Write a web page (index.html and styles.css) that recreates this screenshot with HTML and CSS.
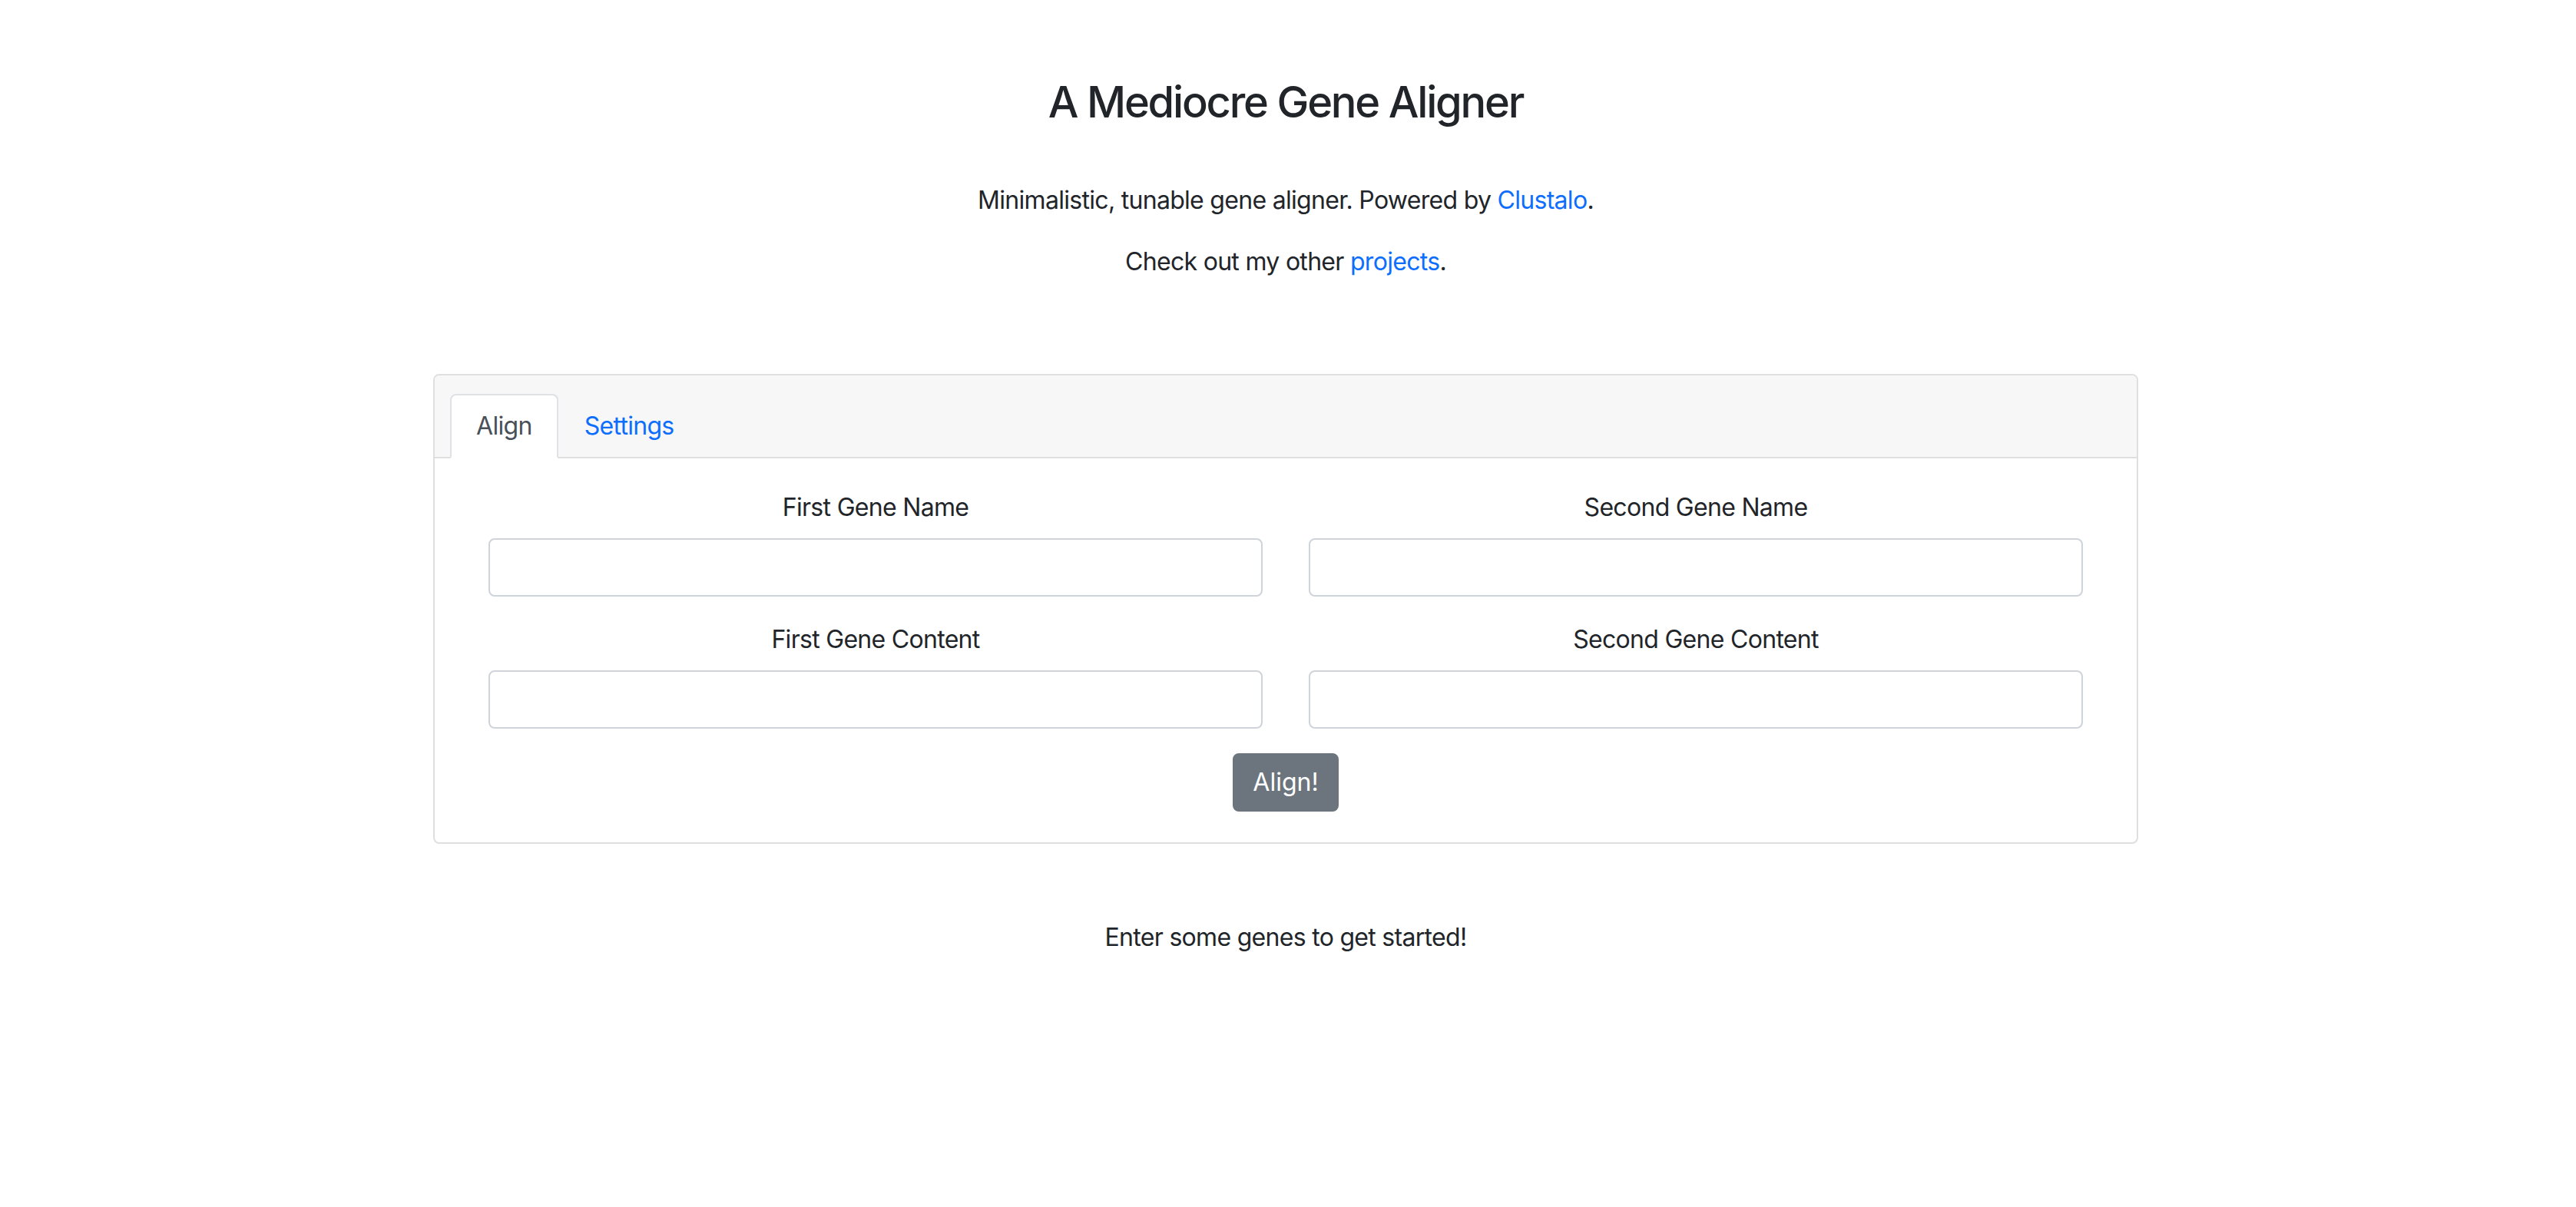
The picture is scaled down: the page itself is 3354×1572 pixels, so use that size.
FILE: index.html
```html
<!DOCTYPE html>
<html lang="en">
<head>
<meta charset="utf-8">
<title>A Mediocre Gene Aligner</title>
<link rel="stylesheet" href="styles.css">
</head>
<body>
<div class="page">
  <header class="intro">
    <h1 class="title">A Mediocre Gene Aligner</h1>
    <p class="lead-line">Minimalistic, tunable gene aligner. Powered by <a href="#">Clustalo</a>.</p>
    <p class="lead-line">Check out my other <a href="#">projects</a>.</p>
  </header>

  <section class="card">
    <div class="card-header">
      <nav class="tabs">
        <a class="tab active" href="#">Align</a>
        <a class="tab" href="#">Settings</a>
      </nav>
    </div>
    <div class="card-body">
      <form class="gene-form">
        <div class="form-grid">
          <div class="field">
            <label for="g1name">First Gene Name</label>
            <input id="g1name" type="text">
          </div>
          <div class="field">
            <label for="g2name">Second Gene Name</label>
            <input id="g2name" type="text">
          </div>
          <div class="field">
            <label for="g1content">First Gene Content</label>
            <input id="g1content" type="text">
          </div>
          <div class="field">
            <label for="g2content">Second Gene Content</label>
            <input id="g2content" type="text">
          </div>
        </div>
        <div class="actions">
          <button type="button" class="btn">Align!</button>
        </div>
      </form>
    </div>
  </section>

  <p class="status">Enter some genes to get started!</p>
</div>
</body>
</html>
```

FILE: styles.css
```css
* { box-sizing: border-box; }

html, body {
  margin: 0;
  padding: 0;
  background: #fff;
}

body {
  padding-right: 6px;
  font-family: Inter, "Noto Sans", "Liberation Sans", sans-serif;
  font-size: 32px;
  line-height: 48px;
  letter-spacing: -0.7px;
  color: #212529;
}

a {
  color: #0d6efd;
  text-decoration: none;
}

.page {
  width: 2220px;
  margin: 0 auto;
}

.intro {
  text-align: center;
  padding-top: 100px;
  padding-bottom: 1px;
}

.title {
  margin: 0 0 70px;
  font-size: 56px;
  line-height: 67px;
  font-weight: 500;
  letter-spacing: -2.2px;
}

.lead-line {
  margin: 0 0 32px;
}

.card {
  margin-top: 89px;
  border: 2px solid #dfdfdf;
  border-radius: 8px;
  overflow: hidden;
}

.card-header {
  background: #f7f7f7;
  border-bottom: 2px solid #dfdfdf;
  padding: 24px 20px 0;
}

.tabs {
  display: flex;
  margin-bottom: -2px;
}

.tab {
  display: block;
  padding: 16px 32px;
  border: 2px solid transparent;
  border-radius: 8px 8px 0 0;
  color: #0d6efd;
}

.tab.active {
  color: #495057;
  background: #fff;
  border-color: #dee2e6 #dee2e6 #fff;
}

.card-body {
  padding: 40px 70px;
}

.form-grid {
  display: grid;
  grid-template-columns: 1fr 1fr;
  column-gap: 60px;
}

.field {
  display: flex;
  flex-direction: column;
  margin-bottom: 32px;
}

.field label {
  text-align: center;
  margin-bottom: 16px;
}

.field input {
  height: 76px;
  width: 100%;
  border: 2px solid #ced4da;
  border-radius: 8px;
  padding: 12px 24px;
  font: inherit;
  color: #495057;
  background: #fff;
}

.actions {
  display: flex;
  justify-content: center;
}

.btn {
  font: inherit;
  color: #fff;
  background: #6c757d;
  border: 2px solid #6c757d;
  border-radius: 8px;
  padding: 12px 24px;
  line-height: 48px;
  cursor: pointer;
}

.status {
  text-align: center;
  margin: 98px 0 0;
}
```
